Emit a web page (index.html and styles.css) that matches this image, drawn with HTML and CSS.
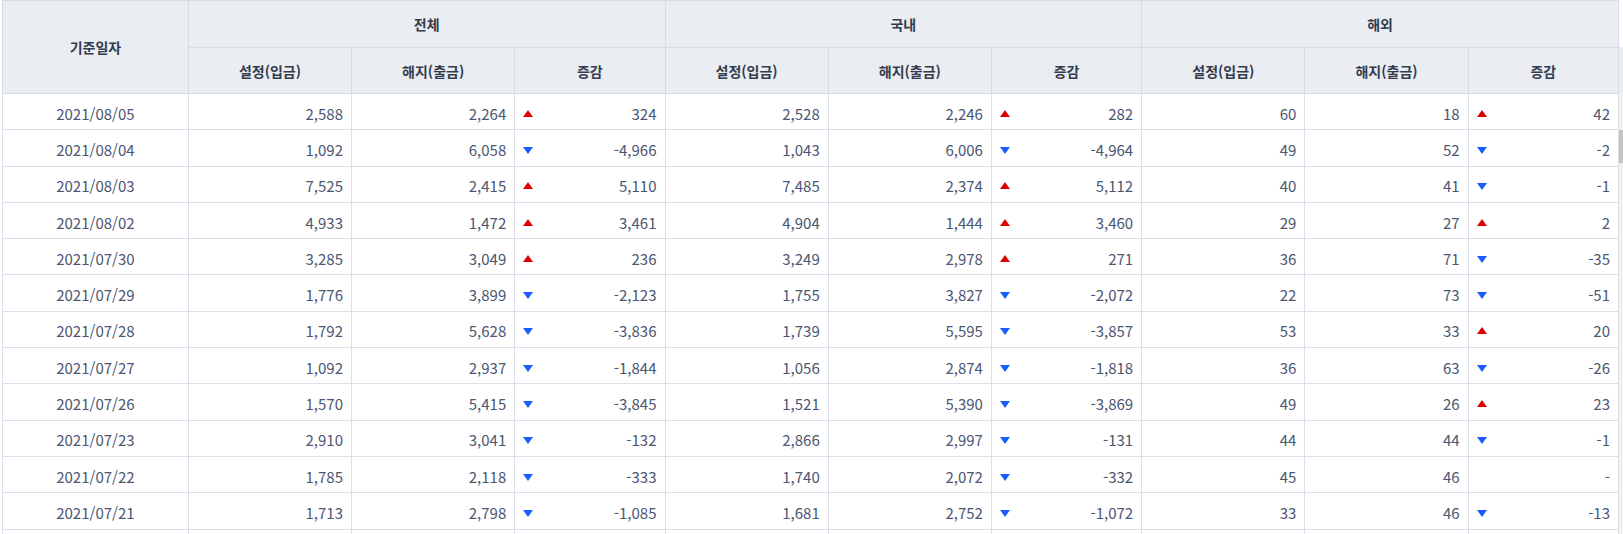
FILE: index.html
```html
<!DOCTYPE html>
<html lang="ko">
<head>
<meta charset="utf-8">
<title>설정/해지 현황</title>
<link rel="stylesheet" href="styles.css">
</head>
<body>
<div class="grid">
  <table class="tbl">
    <colgroup>
      <col class="c-date">
      <col class="c-num"><col class="c-num"><col class="c-diff">
      <col class="c-num"><col class="c-num"><col class="c-diff">
      <col class="c-num"><col class="c-num"><col class="c-diff">
    </colgroup>
    <thead>
      <tr class="h1">
        <th rowspan="2">기준일자</th>
        <th colspan="3">전체</th>
        <th colspan="3">국내</th>
        <th colspan="3">해외</th>
      </tr>
      <tr class="h2">
        <th>설정(입금)</th><th>해지(출금)</th><th>증감</th>
        <th>설정(입금)</th><th>해지(출금)</th><th>증감</th>
        <th>설정(입금)</th><th>해지(출금)</th><th>증감</th>
      </tr>
    </thead>
    <tbody id="body">
      <tr><td class="date">2021/08/05</td><td>2,588</td><td>2,264</td><td class="diff"><span class="tri up"></span>324</td><td>2,528</td><td>2,246</td><td class="diff"><span class="tri up"></span>282</td><td>60</td><td>18</td><td class="diff"><span class="tri up"></span>42</td></tr>
      <tr><td class="date">2021/08/04</td><td>1,092</td><td>6,058</td><td class="diff"><span class="tri down"></span>-4,966</td><td>1,043</td><td>6,006</td><td class="diff"><span class="tri down"></span>-4,964</td><td>49</td><td>52</td><td class="diff"><span class="tri down"></span>-2</td></tr>
      <tr><td class="date">2021/08/03</td><td>7,525</td><td>2,415</td><td class="diff"><span class="tri up"></span>5,110</td><td>7,485</td><td>2,374</td><td class="diff"><span class="tri up"></span>5,112</td><td>40</td><td>41</td><td class="diff"><span class="tri down"></span>-1</td></tr>
      <tr><td class="date">2021/08/02</td><td>4,933</td><td>1,472</td><td class="diff"><span class="tri up"></span>3,461</td><td>4,904</td><td>1,444</td><td class="diff"><span class="tri up"></span>3,460</td><td>29</td><td>27</td><td class="diff"><span class="tri up"></span>2</td></tr>
      <tr><td class="date">2021/07/30</td><td>3,285</td><td>3,049</td><td class="diff"><span class="tri up"></span>236</td><td>3,249</td><td>2,978</td><td class="diff"><span class="tri up"></span>271</td><td>36</td><td>71</td><td class="diff"><span class="tri down"></span>-35</td></tr>
      <tr><td class="date">2021/07/29</td><td>1,776</td><td>3,899</td><td class="diff"><span class="tri down"></span>-2,123</td><td>1,755</td><td>3,827</td><td class="diff"><span class="tri down"></span>-2,072</td><td>22</td><td>73</td><td class="diff"><span class="tri down"></span>-51</td></tr>
      <tr><td class="date">2021/07/28</td><td>1,792</td><td>5,628</td><td class="diff"><span class="tri down"></span>-3,836</td><td>1,739</td><td>5,595</td><td class="diff"><span class="tri down"></span>-3,857</td><td>53</td><td>33</td><td class="diff"><span class="tri up"></span>20</td></tr>
      <tr><td class="date">2021/07/27</td><td>1,092</td><td>2,937</td><td class="diff"><span class="tri down"></span>-1,844</td><td>1,056</td><td>2,874</td><td class="diff"><span class="tri down"></span>-1,818</td><td>36</td><td>63</td><td class="diff"><span class="tri down"></span>-26</td></tr>
      <tr><td class="date">2021/07/26</td><td>1,570</td><td>5,415</td><td class="diff"><span class="tri down"></span>-3,845</td><td>1,521</td><td>5,390</td><td class="diff"><span class="tri down"></span>-3,869</td><td>49</td><td>26</td><td class="diff"><span class="tri up"></span>23</td></tr>
      <tr><td class="date">2021/07/23</td><td>2,910</td><td>3,041</td><td class="diff"><span class="tri down"></span>-132</td><td>2,866</td><td>2,997</td><td class="diff"><span class="tri down"></span>-131</td><td>44</td><td>44</td><td class="diff"><span class="tri down"></span>-1</td></tr>
      <tr><td class="date">2021/07/22</td><td>1,785</td><td>2,118</td><td class="diff"><span class="tri down"></span>-333</td><td>1,740</td><td>2,072</td><td class="diff"><span class="tri down"></span>-332</td><td>45</td><td>46</td><td class="diff">-</td></tr>
      <tr><td class="date">2021/07/21</td><td>1,713</td><td>2,798</td><td class="diff"><span class="tri down"></span>-1,085</td><td>1,681</td><td>2,752</td><td class="diff"><span class="tri down"></span>-1,072</td><td>33</td><td>46</td><td class="diff"><span class="tri down"></span>-13</td></tr>
      <tr class="blank"><td></td><td></td><td></td><td></td><td></td><td></td><td></td><td></td><td></td><td></td></tr>
    </tbody>
  </table>
  <div class="gutter">
    <div class="g-top"></div>
    <div class="g-head"></div>
    <div class="track"><div class="thumb"></div></div>
  </div>
</div>
</body>
</html>
```

FILE: styles.css
```css
html, body {
  margin: 0;
  padding: 0;
  background: #ffffff;
  overflow: hidden;
}
body {
  font-family: "Noto Sans CJK KR", "Noto Sans", sans-serif;
  color: #4b5672;
}
.grid {
  display: flex;
  width: 1623px;
  height: 534px;
  padding-left: 2px;
  box-sizing: border-box;
  overflow: hidden;
}
.tbl {
  width: 1617px;
  flex: none;
  border-collapse: collapse;
  table-layout: fixed;
  font-size: 15px;
}
.c-date { width: 11.5%; }
.c-num { width: 10.1%; }
.c-diff { width: 9.3%; }
.tbl th {
  background: #eaedf2;
  border: 1px solid #d7dbe5;
  color: #333c4e;
  font-size: 14px;
  font-weight: 700;
  padding: 0;
  text-align: center;
}
.h1 th { height: 46px; }
.h2 th { height: 45px; }
.tbl td {
  height: 36.3px;
  padding: 3px 8px 0 8px;
  border: 1px solid #dcdfe9;
  text-align: right;
  white-space: nowrap;
  box-sizing: border-box;
}
.tbl td.date { text-align: center; }
.tri {
  float: left;
  width: 0;
  height: 0;
  border-left: 5px solid transparent;
  border-right: 5px solid transparent;
}
.tri.up { border-bottom: 7px solid #e00000; margin-top: 7px; }
.tri.down { border-top: 7px solid #1a5cff; margin-top: 8px; }
.gutter {
  flex: 1;
  display: flex;
  flex-direction: column;
}
.g-top { height: 47px; background: #ffffff; }
.g-head { height: 45px; background: #eaedf2; }
.track {
  flex: 1;
  background: #f1f1f1;
  padding-top: 38px;
}
.thumb {
  height: 33px;
  background: #c4c4c4;
}
```
